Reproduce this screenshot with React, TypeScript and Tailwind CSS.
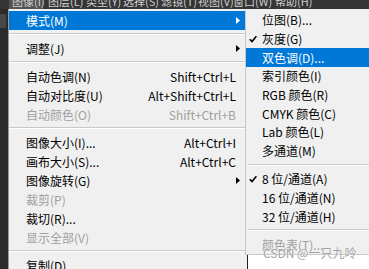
import React from "react";

type Item =
  | { sep: true }
  | {
      sep?: false;
      label: string;
      shortcut?: string;
      arrow?: boolean;
      disabled?: boolean;
      active?: boolean;
      checked?: boolean;
    };

const mainItems: Item[] = [
  { label: "模式(M)", arrow: true, active: true },
  { sep: true },
  { label: "调整(J)", arrow: true },
  { sep: true },
  { label: "自动色调(N)", shortcut: "Shift+Ctrl+L" },
  { label: "自动对比度(U)", shortcut: "Alt+Shift+Ctrl+L" },
  { label: "自动颜色(O)", shortcut: "Shift+Ctrl+B", disabled: true },
  { sep: true },
  { label: "图像大小(I)...", shortcut: "Alt+Ctrl+I" },
  { label: "画布大小(S)...", shortcut: "Alt+Ctrl+C" },
  { label: "图像旋转(G)", arrow: true },
  { label: "裁剪(P)", disabled: true },
  { label: "裁切(R)..." },
  { label: "显示全部(V)", disabled: true },
  { sep: true },
  { label: "复制(D)..." },
];

const subItems: Item[] = [
  { label: "位图(B)..." },
  { label: "灰度(G)", checked: true },
  { label: "双色调(D)...", active: true },
  { label: "索引颜色(I)" },
  { label: "RGB 颜色(R)" },
  { label: "CMYK 颜色(C)" },
  { label: "Lab 颜色(L)" },
  { label: "多通道(M)" },
  { sep: true },
  { label: "8 位/通道(A)", checked: true },
  { label: "16 位/通道(N)" },
  { label: "32 位/通道(H)" },
  { sep: true },
  { label: "颜色表(T)...", disabled: true },
];

// top bar menus after the first one, with the width each one takes
const topMenus: [string, string][] = [
  ["图层(L)", "w-[38px]"],
  ["类型(Y)", "w-[37px]"],
  ["选择(S)", "w-[38px]"],
  ["滤镜(T)", "w-[37px]"],
  ["视图(V)", "w-[35px]"],
  ["窗口(W)", "w-[42px]"],
  ["帮助(H)", "w-[44px]"],
];

function Arrow({ white }: { white?: boolean }) {
  return (
    <svg width="4" height="7" viewBox="0 0 4 7" className="shrink-0">
      <path d="M0 0 L4 3.5 L0 7 Z" fill={white ? "#ffffff" : "#000000"} />
    </svg>
  );
}

function Check() {
  return (
    <svg width="8" height="8" viewBox="0 0 8 8">
      <path d="M0.8 4.2 L3 6.6 L7.4 1.2" fill="none" stroke="#000" strokeWidth="1.6" />
    </svg>
  );
}

function Separator({ h = "h-[9px]" }: { h?: string }) {
  return (
    <div className={h + " pt-[3px]"}>
      <div className="h-px bg-[#c8c8c8]" />
      <div className="h-px bg-white" />
    </div>
  );
}

export default function App() {
  return (
    <div
      className="relative w-[369px] h-[269px] overflow-hidden bg-[#2e2e2e] text-[12px]"
      style={{ fontFamily: '"Noto Sans CJK SC", "Noto Sans", sans-serif' }}
    >
      {/* top menu bar, cut at the top */}
      <div className="h-[9px] flex items-end overflow-hidden bg-[#353535] text-[#cfcfcf] text-[11px]">
        <div className="w-[9px] shrink-0 self-stretch" />
        <div className="w-[34px] shrink-0 pl-[3px] h-[13px] leading-[11px] bg-[#535353] whitespace-nowrap">
          图像(I)
        </div>
        <div className="w-[5px] shrink-0" />
        {topMenus.map(([m, w]) => (
          <div key={m} className={w + " shrink-0 h-[13px] leading-[11px] whitespace-nowrap"}>
            {m}
          </div>
        ))}
      </div>

      <div className="flex h-[260px]">
        {/* left dark strip */}
        <div className="w-[8px] shrink-0 bg-[#2b2b2b] flex flex-col pt-[5px]">
          <div className="h-[14px] w-[6px] bg-[#474747]" />
        </div>

        {/* main menu */}
        <div className="w-[237px] shrink-0 bg-[#f0f0f0] border-l border-[#9a9a9a] pt-[2px] text-black">
          {mainItems.map((it, i) =>
            it.sep ? (
              <Separator key={i} />
            ) : (
              <div
                key={i}
                className={
                  "h-[19px] flex items-center pl-[17px] " +
                  (it.arrow ? "pr-[5px] " : "pr-[9px] ") +
                  (it.active ? "bg-[#0078d7] text-white " : "") +
                  (it.disabled ? "text-[#a0a0a0]" : "")
                }
              >
                <span className="flex-1 whitespace-nowrap">{it.label}</span>
                {it.shortcut && <span className="whitespace-nowrap">{it.shortcut}</span>}
                {it.arrow && <Arrow white={it.active} />}
              </div>
            )
          )}
        </div>

        {/* submenu column */}
        <div className="flex-1 flex flex-col">
          <div className="bg-[#f0f0f0] border-l border-b border-[#c8c8c8] pt-[2px] text-black">
            {subItems.map((it, i) =>
              it.sep ? (
                <div key={i} className="pl-[2px]">
                  <Separator h="h-[9.5px]" />
                </div>
              ) : (
                <div
                  key={i}
                  className={
                    "h-[18.7px] flex items-center whitespace-nowrap " +
                    (it.active ? "bg-[#0078d7] text-white " : "") +
                    (it.disabled ? "text-[#a0a0a0]" : "")
                  }
                >
                  <span className="w-[16px] pl-[3px] shrink-0 flex items-center">
                    {it.checked && <Check />}
                  </span>
                  <span>{it.label}</span>
                </div>
              )
            )}
          </div>
          <div className="flex-1 flex">
            <div className="w-[2px] bg-[#f0f0f0]" />
            <div className="w-px bg-[#1e1e1e]" />
            <div className="flex-1 bg-white" />
          </div>
        </div>
      </div>

      {/* watermark */}
      <div className="absolute left-[263px] top-[244px] text-[12px] text-[#a4a4a4] whitespace-nowrap [text-shadow:0_0_1px_#fff]">
        CSDN @一只九呤
      </div>
    </div>
  );
}
